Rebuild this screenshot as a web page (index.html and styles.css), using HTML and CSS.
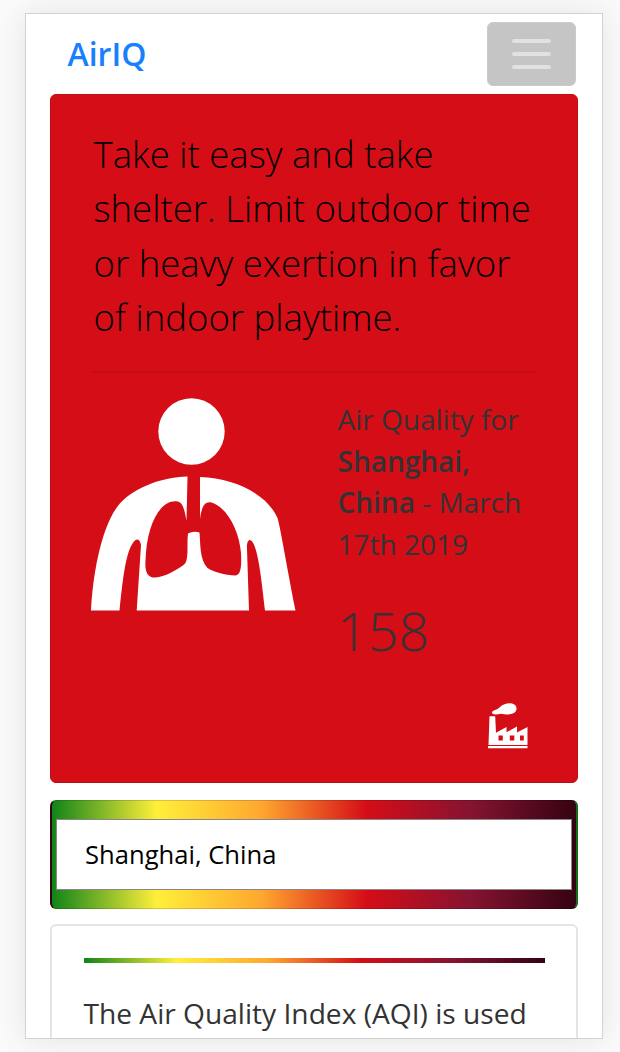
FILE: index.html
```
<!DOCTYPE html>
<html lang="en">
<head>
<meta charset="utf-8">
<title>AirIQ</title>
<link rel="stylesheet" href="styles.css">
</head>
<body>
<div class="screen">
  <header class="navbar">
    <a class="brand">AirIQ</a>
    <button class="toggler" aria-label="Menu"><span></span><span></span><span></span></button>
  </header>
  <main class="content">
    <section class="advice">
      <p class="lead">Take it easy and take<br>shelter. Limit outdoor time<br>or heavy exertion in favor<br>of indoor playtime.</p>
      <hr class="rule">
      <div class="reading">
        <svg class="body-icon" width="206" height="214" viewBox="0.500 0 206 214">
          <circle cx="101" cy="33.5" r="33.2"/>
          <path fill-rule="evenodd" d="M0.5 212.600C2 180 10 131 27 108.500C40 91 70 79 97 78.500L96 123C94 111 92 104 87 103.500C70 101 56 126 55 163C54 175 58 180 65 179.500C74 179 86 172 93 167C99 163 96 147 97.500 135.500Q103 132.500 109 134.500C110 145 109 162 117 170C123 174 134 177 145 177.500C151 177 151 166 150.500 155C149 135 138 110 121 104.500C114 103 111 109 109.500 121V79C145 80 177 97 187 120C190 130 196 167 205 212.600H174.500C171 182 167 142 159 142Q156 143 156.500 151L158.500 212.600H46.200L50.500 147Q49 140 45 142C35 150 32 185 29 212.600Z"/>
        </svg>
        <div class="details">
          <p class="place">Air Quality for<br><strong>Shanghai,<br>China</strong> - March<br>17th 2019</p>
          <p class="value">158</p>
        </div>
      </div>
      <svg class="factory" width="40" height="46" viewBox="0 0 40 46">
        <path d="M4 9.500C4 7 8 8 12 4C18-1.500 28-0.500 28.500 5C29 12 19 12 13 10.800Q4 12.500 4 9.500ZM1.500 13.200H7.200L8 29.800L18.500 24V29.300L29 23.500V29.500L39.500 24V42H0.500ZM10.500 32.500V37.500H14.800V32.500ZM21.800 32.500V37.500H26.300V32.500ZM32 32.500V37.500H35.800V32.500ZM0 43H39.500V45.300H0Z" fill-rule="evenodd"/>
      </svg>
    </section>
    <section class="search"><div class="field">Shanghai, China</div></section>
    <section class="info">
      <div class="scale"></div>
      <p class="about">The Air Quality Index (AQI) is used</p>
    </section>
  </main>
</div>
</body>
</html>
```
FILE: styles.css
```
* { box-sizing: border-box; }
body {
  margin: 0;
  height: 1052px;
  padding: 13px 17px 13px 25px;
  overflow: hidden;
  background: #fafafa;
  color: #333;
  font: 28px/41.6px "Open Sans", sans-serif;
}
p { margin: 0; white-space: nowrap; }
.screen {
  height: 1026px;
  overflow: hidden;
  background: #fff;
  border: 1px solid #d2d2d2;
  box-shadow: 0 0 28px rgba(0, 0, 0, .09);
}
.navbar {
  display: flex;
  align-items: center;
  justify-content: space-between;
  height: 80px;
  padding: 0 26px 0 41.5px;
}
.brand { padding-bottom: 1px; color: #1780ff; font-size: 32px; font-weight: 600; }
.toggler {
  display: flex;
  flex-direction: column;
  align-items: center;
  justify-content: center;
  gap: 9px;
  width: 89px;
  height: 64px;
  padding: 0;
  border: 1px solid #cacaca;
  border-radius: 6px;
  background: #c5c5c5;
}
.toggler span { width: 39px; height: 4px; border-radius: 2px; background: #e1e1e1; }
.content {
  display: flex;
  flex-direction: column;
  gap: 16px;
  padding: 0 24px;
}
.advice {
  display: flex;
  flex-direction: column;
  height: 689px;
  padding: 32px 40px 0;
  border: 1px solid #bd0d15;
  border-radius: 6px;
  background: #d50d17;
}
.lead {
  padding-left: 2.5px;
  color: #000;
  font-size: 36.55px;
  font-weight: 300;
  line-height: 54.3px;
}
.rule { width: 100%; height: 2px; margin: 27px 0 25px; border: 0; background: #c80c16; }
.reading { display: flex; gap: 40.5px; height: 305px; }
.body-icon, .factory { flex: none; fill: #fff; }
.details { padding-top: 1px; }
.details strong { font-weight: 600; }
.value { margin-top: 26px; font-size: 53.8px; font-weight: 300; line-height: 76px; }
.factory { align-self: flex-end; margin-right: 9px; }
.search {
  height: 109px;
  margin-top: 1px;
  padding: 18px 4px;
  border: 1px solid;
  border-width: 1px 2px;
  border-color: rgba(0, 0, 0, .15) #176d17 rgba(0, 0, 0, .15) #350514;
  border-radius: 6px;
  background: linear-gradient(90deg, #108418, #ffef3a 20%, #ffa72f 40%, #d50d17 60%, #851331 80%, #350311);
}
.field {
  height: 71px;
  padding-left: 28px;
  border: 1px solid #8b8589;
  background: #fff;
  color: #000;
  font-size: 25.6px;
  line-height: 70px;
}
.info {
  height: 180px;
  margin-top: -1px;
  padding: 32px 31.5px 0;
  border: 2px solid #e4e4e4;
  border-radius: 6px;
}
.scale {
  height: 5px;
  background: linear-gradient(90deg, #108418, #ffef3a 20%, #ffa72f 40%, #d50d17 60%, #851331 80%, #350311);
}
.about { margin-top: 30px; font-size: 28.15px; }
```
